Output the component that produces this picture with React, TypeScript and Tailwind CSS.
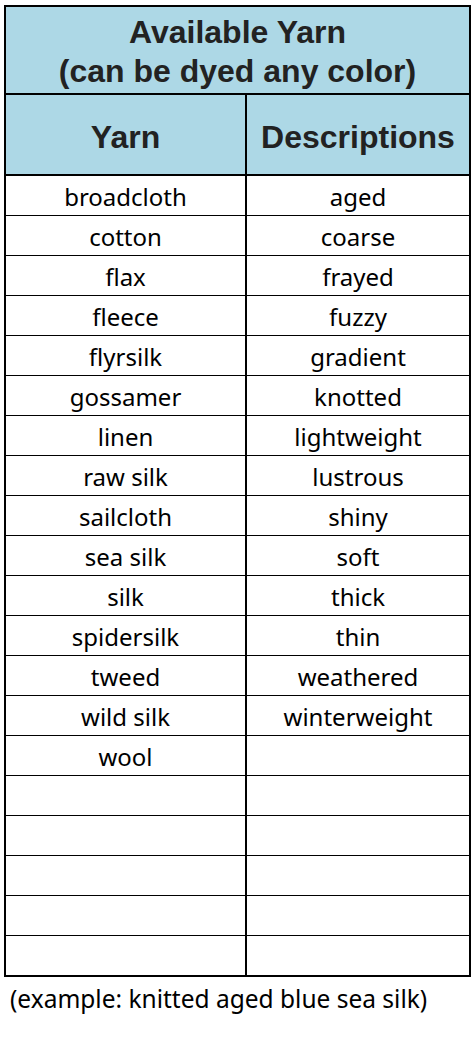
import React from 'react';

const yarns = [
  'broadcloth', 'cotton', 'flax', 'fleece', 'flyrsilk', 'gossamer', 'linen', 'raw silk',
  'sailcloth', 'sea silk', 'silk', 'spidersilk', 'tweed', 'wild silk', 'wool',
];

const descriptions = [
  'aged', 'coarse', 'frayed', 'fuzzy', 'gradient', 'knotted', 'lightweight', 'lustrous',
  'shiny', 'soft', 'thick', 'thin', 'weathered', 'winterweight',
];

const ROWS = 20;

export default function App() {
  const rows = Array.from({ length: ROWS }, (_, i) => ({
    yarn: yarns[i] ?? '',
    desc: descriptions[i] ?? '',
  }));

  return (
    <div className="bg-white min-h-screen pt-[5px] pl-[4px]">
      <div className="w-[467px] border-2 border-black">
        {/* Title */}
        <div className="h-[88px] pt-[4px] border-b-2 border-black bg-[#add8e6] flex flex-col items-center justify-center text-[32px] leading-[39px] font-bold text-[#222] font-['Liberation_Sans',Arial,sans-serif]">
          <div>Available Yarn</div>
          <div>(can be dyed any color)</div>
        </div>

        {/* Column headers */}
        <div className="h-[81px] border-b-2 border-black bg-[#add8e6] flex text-[32px] font-bold text-[#222] font-['Liberation_Sans',Arial,sans-serif]">
          <div className="w-[241px] pt-[5px] border-r-2 border-black flex items-center justify-center">Yarn</div>
          <div className="flex-1 pt-[5px] flex items-center justify-center">Descriptions</div>
        </div>

        {/* Rows */}
        {rows.map((row, i) => (
          <div
            key={i}
            className={`flex text-[24px] text-black font-['Noto_Sans',sans-serif] ${i < ROWS - 1 ? 'h-[40px] border-b border-black' : 'h-[39px]'}`}
          >
            <div className="w-[241px] pt-[3px] border-r-2 border-black flex items-center justify-center">{row.yarn}</div>
            <div className="flex-1 pt-[3px] flex items-center justify-center">{row.desc}</div>
          </div>
        ))}
      </div>

      <p className="mt-[6px] pl-[6px] text-[24.5px] leading-[32px] text-black font-['Noto_Sans',sans-serif]">
        (example: knitted aged blue sea silk)
      </p>
    </div>
  );
}
